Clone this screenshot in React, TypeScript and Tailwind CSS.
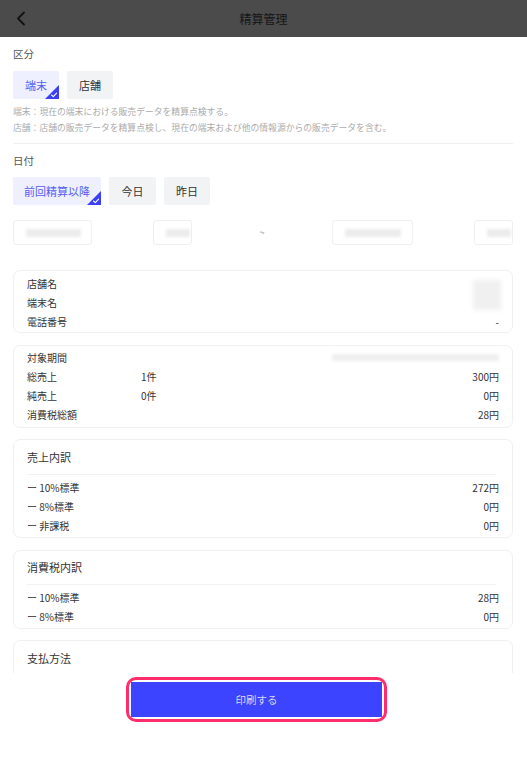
import React from "react";

const font = { fontFamily: '"Noto Sans CJK JP", "Noto Sans", sans-serif' };

function Badge() {
  return (
    <svg className="absolute bottom-0 right-0" width="14" height="14" viewBox="0 0 14 14">
      <path d="M14 0 L14 14 L0 14 Z" fill="#3b3ff5" />
      <path d="M6.5 10 L8.3 11.6 L11.6 8.2" stroke="#fff" strokeWidth="1.1" fill="none" strokeLinecap="round" strokeLinejoin="round" />
    </svg>
  );
}

function Chip({ label, active, w }: { label: string; active?: boolean; w: string }) {
  return (
    <div
      className={`relative h-[28px] ${w} flex items-center justify-center rounded-[2px] text-[11px] ${
        active ? "bg-[#eef0ff] text-[#575cf2]" : "bg-[#f2f3f5] text-[#333333]"
      }`}
    >
      {label}
      {active && <Badge />}
    </div>
  );
}

function DateBox({ w, bar, cls = "" }: { w: string; bar: string; cls?: string }) {
  return (
    <div className={`h-[25px] ${w} ${cls} shrink-0 rounded-[3px] border border-[#efefef] flex items-center pl-[12px]`}>
      <div className={`h-[8px] ${bar} bg-[#ececec] blur-[1.5px]`} />
    </div>
  );
}

function Row({ label, mid, value }: { label: string; mid?: string; value?: React.ReactNode }) {
  return (
    <div className="flex items-center h-[19px] text-[10px] text-[#333333]">
      <div className="w-[114px] shrink-0">{label}</div>
      <div className="flex-1">{mid}</div>
      <div className="text-right">{value}</div>
    </div>
  );
}

function Card({ children, cls }: { children: React.ReactNode; cls: string }) {
  return (
    <div className={`rounded-[7px] border border-[#f0f0f0] pl-[13px] pr-[13px] ${cls}`}>{children}</div>
  );
}

function TitledCard({ title, cls, children }: { title: string; cls: string; children?: React.ReactNode }) {
  return (
    <div className={`rounded-[7px] border border-[#f0f0f0] pl-[13px] pr-[13px] ${cls}`}>
      <div className="h-[20px] flex items-center text-[11px] text-[#333333]">{title}</div>
      {children && (
        <>
          <div className="mt-[7px] mr-[3px] border-t border-[#f2f2f2]" />
          <div className="pt-[3px] pb-[2px]">{children}</div>
        </>
      )}
    </div>
  );
}

export default function App() {
  return (
    <div className="h-[758px] w-[527px] flex flex-col overflow-hidden bg-white" style={font}>
      <div className="h-[37px] shrink-0 bg-[#4b4b4b] relative flex items-center justify-center">
        <svg className="absolute left-[15px] top-[11px]" width="12" height="15" viewBox="0 0 12 15">
          <path d="M9 1.5 L3 7.5 L9 13.5" stroke="#111" strokeWidth="1.8" fill="none" strokeLinecap="round" strokeLinejoin="round" />
        </svg>
        <div className="text-[12px] text-[#151515]">精算管理</div>
      </div>

      <div className="flex-1 overflow-hidden pl-[13px] pr-[14px]">
        <div className="pt-[10px] h-[24px] leading-[14px] text-[10.5px] text-[#555555]">区分</div>
        <div className="mt-[10px] flex gap-[8px]">
          <Chip label="端末" active w="w-[46px]" />
          <Chip label="店舗" w="w-[46px]" />
        </div>
        <div className="mt-[5px] text-[8.8px] leading-[16px] text-[#ababab]">
          <div>端末：現在の端末における販売データを精算点検する。</div>
          <div>店舗：店舗の販売データを精算点検し、現在の端末および他の情報源からの販売データを含む。</div>
        </div>
        <div className="mt-[7px] border-t border-[#f0f0f0]" />
        <div className="mt-[10px] h-[14px] leading-[14px] text-[10.5px] text-[#555555]">日付</div>
        <div className="mt-[9px] flex gap-[8px]">
          <Chip label="前回精算以降" active w="w-[88px]" />
          <Chip label="今日" w="w-[47px]" />
          <Chip label="昨日" w="w-[46px]" />
        </div>
        <div className="mt-[15px] flex items-center">
          <DateBox w="w-[79px]" bar="w-[55px]" />
          <DateBox w="w-[39px]" bar="w-[24px]" cls="ml-[61px]" />
          <div className="flex-1 text-center text-[9px] text-[#777777]">~</div>
          <DateBox w="w-[81px]" bar="w-[56px]" />
          <DateBox w="w-[39px]" bar="w-[24px]" cls="ml-[61px]" />
        </div>

        <Card cls="mt-[25px] pt-[3px] pb-[1px] relative">
          <Row label="店舗名" />
          <Row label="端末名" />
          <Row label="電話番号" value="-" />
          <div className="absolute right-[11px] top-[9px] h-[30px] w-[28px] bg-[#f0f0f0] blur-[2px]" />
        </Card>

        <Card cls="mt-[12px] pt-[2px] pb-[3px]">
          <Row
            label="対象期間"
            value={<div className="h-[7px] w-[167px] bg-[#efefef] blur-[1.5px]" />}
          />
          <Row label="総売上" mid="1件" value="300円" />
          <Row label="純売上" mid="0件" value="0円" />
          <Row label="消費税総額" value="28円" />
        </Card>

        <TitledCard title="売上内訳" cls="mt-[11px] pt-[7px]">
          <Row label="ー 10%標準" value="272円" />
          <Row label="ー 8%標準" value="0円" />
          <Row label="ー 非課税" value="0円" />
        </TitledCard>

        <TitledCard title="消費税内訳" cls="mt-[12px] pt-[6px]">
          <Row label="ー 10%標準" value="28円" />
          <Row label="ー 8%標準" value="0円" />
        </TitledCard>

        <div className="mt-[11px] rounded-[7px] border border-[#f0f0f0] pl-[13px] pr-[13px] pt-[7px] h-[80px]">
          <div className="h-[20px] flex items-center text-[11px] text-[#333333]">支払方法</div>
        </div>
      </div>

      <div className="h-[85px] shrink-0 bg-white flex justify-center pt-[4px] pr-[14px]">
        <div className="h-[45px] w-[261px] rounded-[10px] border-[3px] border-[#ff2d6b] p-[2px]">
          <div className="h-full w-full bg-[#3d44ff] flex items-center justify-center text-[10.5px] text-[#d8d9ff]">
            印刷する
          </div>
        </div>
      </div>
    </div>
  );
}
